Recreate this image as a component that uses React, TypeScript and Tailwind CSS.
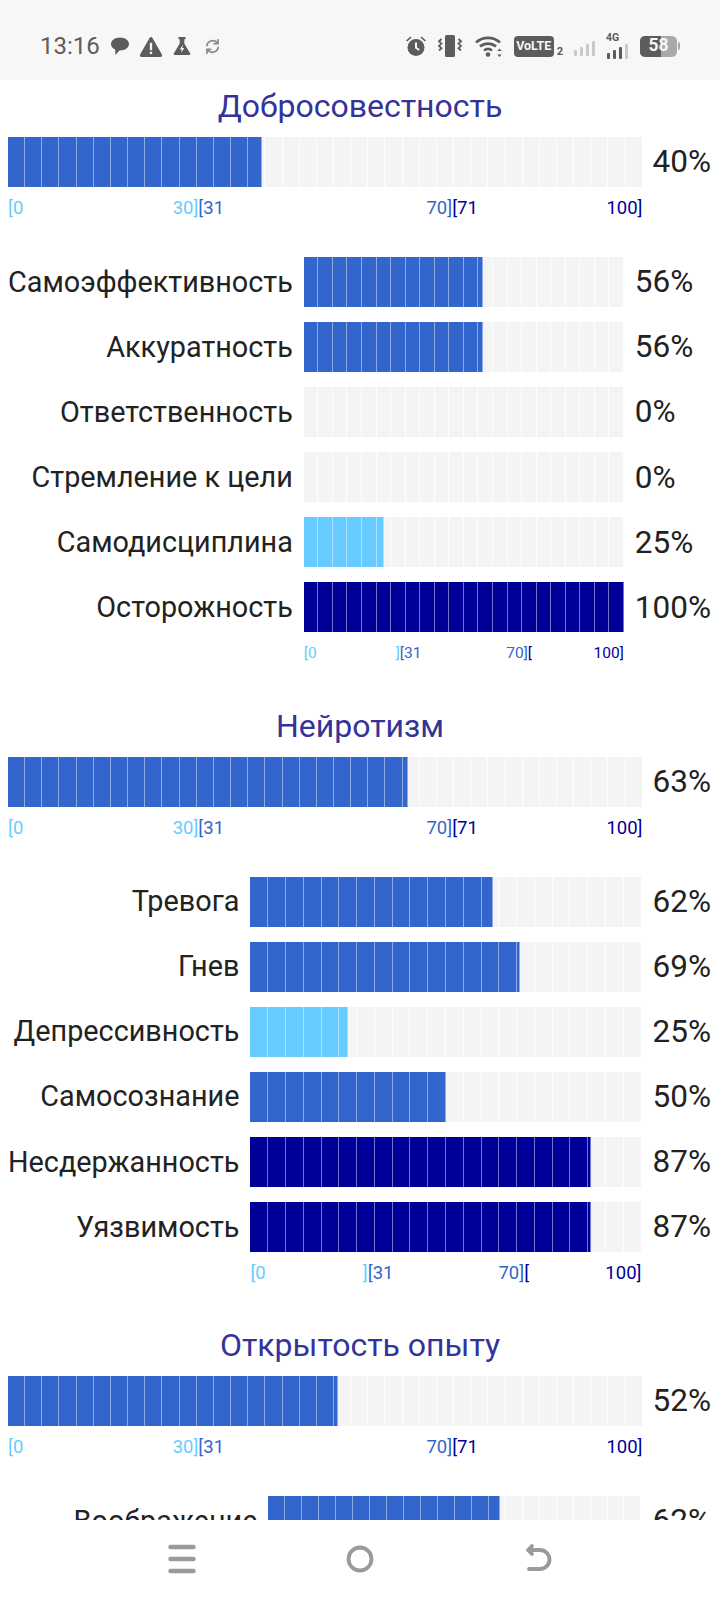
import React from "react";

type Facet = { name: string; pct: number };
type Trait = { title: string; pct: number; scaleSize: string; facets: Facet[] };

const traits: Trait[] = [
  {
    title: "Добросовестность",
    pct: 40,
    scaleSize: "text-[15.5px]",
    facets: [
      { name: "Самоэффективность", pct: 56 },
      { name: "Аккуратность", pct: 56 },
      { name: "Ответственность", pct: 0 },
      { name: "Стремление к цели", pct: 0 },
      { name: "Самодисциплина", pct: 25 },
      { name: "Осторожность", pct: 100 },
    ],
  },
  {
    title: "Нейротизм",
    pct: 63,
    scaleSize: "text-[18.5px]",
    facets: [
      { name: "Тревога", pct: 62 },
      { name: "Гнев", pct: 69 },
      { name: "Депрессивность", pct: 25 },
      { name: "Самосознание", pct: 50 },
      { name: "Несдержанность", pct: 87 },
      { name: "Уязвимость", pct: 87 },
    ],
  },
  {
    title: "Открытость опыту",
    pct: 52,
    scaleSize: "text-[18px]",
    facets: [
      { name: "Воображение", pct: 62 },
      { name: "Эмоциональность", pct: 50 },
      { name: "Авантюризм", pct: 44 },
      { name: "Интеллект", pct: 75 },
    ],
  },
];

const fillColor = (pct: number) =>
  pct <= 30 ? "bg-[#66ccff]" : pct <= 70 ? "bg-[#3366cc]" : "bg-[#000099]";

function SegmentBar({ pct, segments }: { pct: number; segments: number }) {
  const filled = (pct / 100) * segments;
  const color = fillColor(pct);
  return (
    <div className="flex h-[50px] w-full">
      {Array.from({ length: segments }).map((_, i) => {
        const f = Math.max(0, Math.min(1, filled - i));
        return (
          <div
            key={i}
            className="min-w-0 flex-1 bg-[#f4f4f4] shadow-[inset_-1px_0_0_#ffffff]"
          >
            {f > 0 && (
              <div
                className={`h-full ${color} shadow-[inset_-1px_0_0_rgba(255,255,255,0.45)]`}
                style={{ width: `${f * 100}%` }}
              />
            )}
          </div>
        );
      })}
    </div>
  );
}

function Scale({ sub, size }: { sub?: boolean; size: string }) {
  return (
    <div className={`flex h-5 leading-5 ${size}`}>
      <div className="flex w-[30%] justify-between text-[#66ccff]">
        <span>[0</span>
        <span>{sub ? "]" : "30]"}</span>
      </div>
      <div className="flex w-[40%] justify-between text-[#3366cc]">
        <span>[31</span>
        <span>70]</span>
      </div>
      <div className="flex w-[30%] justify-between text-[#000099]">
        <span>{sub ? "[" : "[71"}</span>
        <span>100]</span>
      </div>
    </div>
  );
}

function TraitBlock({ trait, first }: { trait: Trait; first?: boolean }) {
  return (
    <section className={first ? "pt-[6px]" : "pt-[42.5px]"}>
      <h2 className="h-10 text-center text-[32px] leading-10 text-[#333399]">
        {trait.title}
      </h2>
      <div className="mt-[11px] grid grid-cols-[1fr_auto] items-center gap-x-[10px] pl-2 pr-[9px]">
        <SegmentBar pct={trait.pct} segments={37} />
        <span className="text-[31.5px] leading-none text-[#222222]">{trait.pct}%</span>
        <div className="col-start-1 mt-[11px]">
          <Scale size="text-[18.5px]" />
        </div>
      </div>
      <div className="mt-[39px] grid grid-cols-[auto_1fr_auto] items-center gap-x-[11px] gap-y-[15.1px] pl-2 pr-[9px]">
        {trait.facets.map((f) => (
          <React.Fragment key={f.name}>
            <span className="text-right text-[28.8px] leading-none text-[#222222]">{f.name}</span>
            <SegmentBar pct={f.pct} segments={22} />
            <span className="text-[31.5px] leading-none text-[#222222]">{f.pct}%</span>
          </React.Fragment>
        ))}
        <div className="col-start-2 -mt-[4.5px]">
          <Scale sub size={trait.scaleSize} />
        </div>
      </div>
    </section>
  );
}

function StatusBar() {
  return (
    <div className="flex h-[80px] shrink-0 items-center bg-[#f7f7f7] pl-[40px] pr-[40px] pt-[12px] text-[#5c5c5c]">
      <span className="text-[24px] leading-none">13:16</span>
      {/* chat bubble */}
      <svg className="ml-[10px]" width="20" height="20" viewBox="0 0 20 20">
        <path d="M10 1.5C5 1.5 1 4.4 1 8c0 2.4 1.6 4.4 4.2 5.5L5.4 19l4-4.5H10c5 0 9-2.9 9-6.5s-4-6.5-9-6.5z" fill="currentColor" />
      </svg>
      {/* warning */}
      <svg className="ml-[9px]" width="24" height="21" viewBox="0 0 22 20">
        <path d="M9.6 1.8a1.6 1.6 0 0 1 2.8 0l9 15.8a1.6 1.6 0 0 1-1.4 2.4H2a1.6 1.6 0 0 1-1.4-2.4z" fill="currentColor" />
        <rect x="9.9" y="6.5" width="2.2" height="7" fill="#f7f7f7" />
        <rect x="9.9" y="15" width="2.2" height="2.2" fill="#f7f7f7" />
      </svg>
      {/* flask */}
      <svg className="ml-[9px]" width="20" height="20" viewBox="0 0 20 20">
        <path d="M6.5 1h7v2.2h-1.2v4.2l5.9 10.1a1 1 0 0 1-.9 1.5H2.7a1 1 0 0 1-.9-1.5l5.9-10.1V3.2H6.5z" fill="currentColor" />
        <path d="M11 8.5l-3.2 5h2.1l-1 3.7 3.4-5.2H10.2z" fill="#f7f7f7" />
      </svg>
      {/* sync */}
      <svg className="ml-[11px]" width="19" height="19" viewBox="0 0 20 20" fill="none" stroke="#8a8a8a" strokeWidth="1.8" strokeLinecap="round">
        <path d="M15.5 6.5A6.5 6.5 0 0 0 4 9" />
        <path d="M4.5 13.5A6.5 6.5 0 0 0 16 11" />
        <path d="M15.8 3v4h-4" />
        <path d="M4.2 17v-4h4" />
      </svg>

      <div className="ml-auto flex items-center">
        {/* alarm */}
        <svg width="24" height="24" viewBox="0 0 24 24">
          <path d="M2 6.5 L6.5 2.5 L7.5 3.7 L3.2 7.6Z M22 6.5 L17.5 2.5 L16.5 3.7 L20.8 7.6Z" fill="currentColor" />
          <circle cx="12" cy="13.5" r="8.5" fill="currentColor" />
          <path d="M12 8.5v5.2l3.3 2.3" stroke="#f7f7f7" strokeWidth="2" fill="none" />
        </svg>
        {/* vibrate */}
        <svg className="ml-[7px]" width="30" height="24" viewBox="0 0 30 24">
          <rect x="10" y="1" width="10" height="22" rx="1.5" fill="currentColor" />
          <path d="M6.5 5l-2.5 2.3 2.5 2.3-2.5 2.3 2.5 2.3-2.5 2.3M23.5 5l2.5 2.3-2.5 2.3 2.5 2.3-2.5 2.3 2.5 2.3" stroke="currentColor" strokeWidth="1.8" fill="none" />
        </svg>
        {/* wifi */}
        <svg className="ml-[9px]" width="30" height="24" viewBox="0 0 30 24">
          <path d="M2 8.5a18 18 0 0 1 24 0" stroke="currentColor" strokeWidth="2.6" fill="none" />
          <path d="M6 12.5a12.5 12.5 0 0 1 16 0" stroke="currentColor" strokeWidth="2.6" fill="none" />
          <path d="M10 16.5a6.5 6.5 0 0 1 8 0" stroke="currentColor" strokeWidth="2.6" fill="none" />
          <circle cx="14" cy="20.5" r="2.3" fill="currentColor" />
          <path d="M25.5 14.5l-2.2 2.6h4.4zM25.5 23l-2.2-2.6h4.4z" fill="currentColor" />
        </svg>
        {/* volte */}
        <div className="ml-[10px] flex items-end">
          <span className="flex h-[21px] w-[40px] items-center justify-center rounded-[4px] bg-[#5c5c5c] text-[12.5px] font-bold leading-none text-[#f7f7f7]">
            VoLTE
          </span>
          <span className="ml-[3px] text-[11px] font-bold leading-none">2</span>
        </div>
        {/* signal sim 2 */}
        <svg className="ml-[10px]" width="22" height="20" viewBox="0 0 22 20">
          <rect x="1" y="14" width="3" height="6" rx="1" fill="#c9c9c9" />
          <rect x="7" y="11" width="3" height="9" rx="1" fill="#c9c9c9" />
          <rect x="13" y="8" width="3" height="12" rx="1" fill="#c9c9c9" />
          <rect x="19" y="5" width="3" height="15" rx="1" fill="#c9c9c9" />
        </svg>
        {/* 4G signal */}
        <div className="relative ml-[11px] h-[26px] w-[24px]">
          <span className="absolute left-0 top-0 text-[10.5px] font-bold leading-none">4G</span>
          <svg className="absolute bottom-0 left-0" width="24" height="20" viewBox="0 0 24 20">
            <rect x="1" y="14" width="3" height="6" rx="1" fill="currentColor" />
            <rect x="7" y="11" width="3" height="9" rx="1" fill="currentColor" />
            <rect x="13" y="8" width="3" height="12" rx="1" fill="currentColor" />
            <rect x="19" y="5" width="3" height="15" rx="1" fill="#c9c9c9" />
          </svg>
        </div>
        {/* battery */}
        <div className="ml-[10px] flex items-center">
          <div className="relative flex h-[21px] w-[37px] items-center justify-center overflow-hidden rounded-[5px] bg-[#a9a9a9]">
            <div className="absolute inset-y-0 left-0 w-[58%] bg-[#5c5c5c]" />
            <span className="relative text-[17.5px] font-bold leading-none text-[#f7f7f7]">58</span>
          </div>
          <div className="ml-[1px] h-[8px] w-[2px] rounded-r-sm bg-[#a9a9a9]" />
        </div>
      </div>
    </div>
  );
}

function NavBar() {
  return (
    <div className="flex h-[80px] shrink-0 justify-center gap-[146px] bg-white pt-[23px]">
      <svg width="32" height="32" viewBox="0 0 32 32" fill="none" stroke="#9a9a9a" strokeWidth="4.4" strokeLinecap="round">
        <path d="M4.5 4h23M4.5 16h23M4.5 28h23" />
      </svg>
      <svg width="32" height="32" viewBox="0 0 32 32" fill="none" stroke="#9a9a9a" strokeWidth="3.8">
        <circle cx="16" cy="16" r="11.5" />
      </svg>
      <svg width="32" height="32" viewBox="0 0 32 32" fill="none" stroke="#9a9a9a" strokeWidth="3.8" strokeLinecap="round" strokeLinejoin="round">
        <path d="M10 3L6 7l4 4" />
        <path d="M6.5 7H18a9.5 9.5 0 0 1 0 19H7" />
      </svg>
    </div>
  );
}

export default function App() {
  return (
    <div className="flex h-[1600px] flex-col overflow-hidden bg-white font-['Roboto',sans-serif]">
      <StatusBar />
      <main className="min-h-0 flex-1 overflow-hidden">
        {traits.map((t, i) => (
          <TraitBlock key={t.title} trait={t} first={i === 0} />
        ))}
      </main>
      <NavBar />
    </div>
  );
}
